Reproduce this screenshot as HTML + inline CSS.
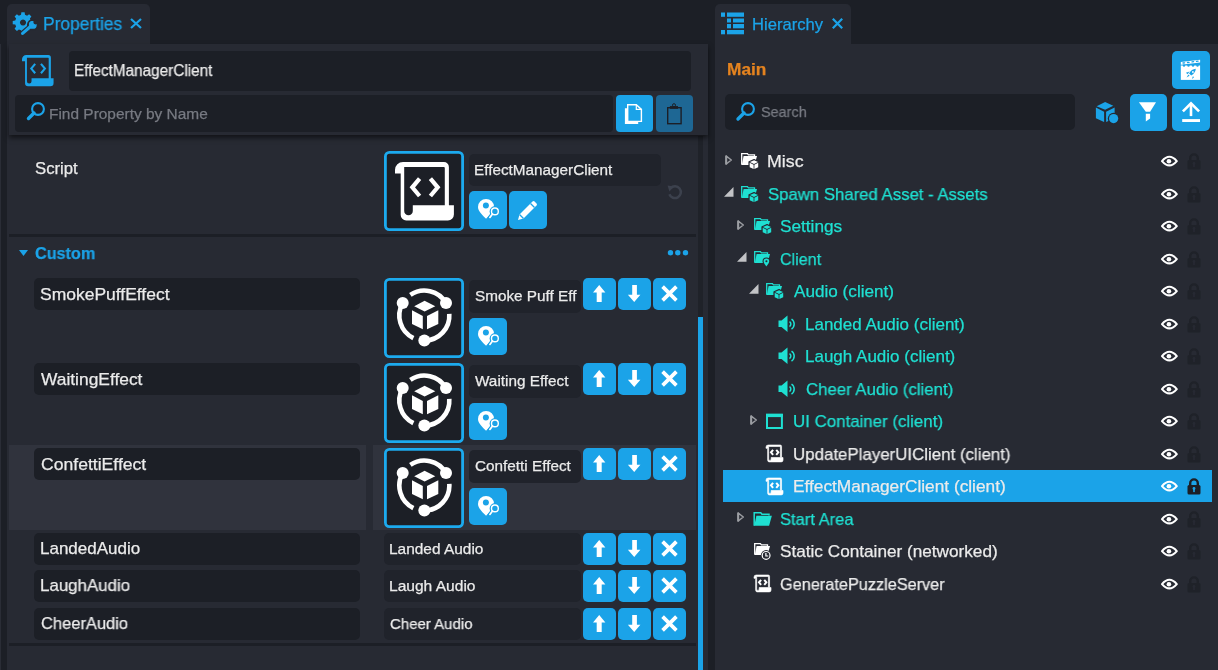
<!DOCTYPE html>
<html><head><meta charset="utf-8"><style>
html,body{margin:0;padding:0;width:1218px;height:670px;overflow:hidden;background:#1c1f26;}
body>div,body>svg,body>span{position:absolute;}
div>span.t, span.t{position:absolute;font-family:"Liberation Sans",sans-serif;white-space:nowrap;line-height:0;height:0;will-change:transform;-webkit-text-stroke:0.25px currentColor;}
svg{position:absolute;overflow:visible}
div{position:absolute;box-sizing:border-box}
</style></head><body>
<div style="left:0px;top:0px;width:1218px;height:670px;background:#1c1f26;border-radius:0px;"></div>
<div style="left:0px;top:44px;width:1px;height:626px;background:#2a2d36;border-radius:0px;"></div>
<div style="left:7px;top:4px;width:143px;height:44px;background:#272a33;border-radius:5px;border-bottom-left-radius:0;border-bottom-right-radius:0"></div>
<div style="left:7px;top:44px;width:701px;height:626px;background:#272a33;border-radius:0px;"></div>
<div style="left:715px;top:4px;width:136px;height:44px;background:#272a33;border-radius:5px;border-bottom-left-radius:0;border-bottom-right-radius:0"></div>
<div style="left:715px;top:44px;width:503px;height:626px;background:#272a33;border-radius:0px;"></div>
<span class="t" style="left:42.61px;top:23.94px;font-size:17.5px;color:#1ba3e8;font-weight:400;transform:scaleX(0.9923);transform-origin:0 0;">Properties</span>
<svg style="left:130px;top:18px" width="12" height="11" viewBox="0 0 12 11"><path d="M1 1L11 10M11 1L1 10" stroke="#1ba3e8" stroke-width="2.2"/></svg>
<svg style="left:10px;top:8px" width="30" height="30" viewBox="0 0 30 30"><path d="M11.37,4.28 L14.63,4.28 L14.99,6.80 L17.07,7.66 L19.11,6.14 L21.41,8.44 L19.89,10.48 L20.75,12.56 L23.27,12.92 L23.27,16.18 L20.75,16.54 L19.89,18.62 L21.41,20.66 L19.11,22.96 L17.07,21.44 L14.99,22.30 L14.63,24.82 L11.37,24.82 L11.01,22.30 L8.93,21.44 L6.89,22.96 L4.59,20.66 L6.11,18.62 L5.25,16.54 L2.73,16.18 L2.73,12.92 L5.25,12.56 L6.11,10.48 L4.59,8.44 L6.89,6.14 L8.93,7.66 L11.01,6.80Z M13,11.5 a3.05,3.05 0 1,0 0.01,0Z" fill="#1ba3e8" fill-rule="evenodd"/><g stroke="#272a33" fill="none"><path d="M12.6,25.4 L20.5,18.5" stroke-width="5.4" stroke-linecap="round"/><circle cx="22.8" cy="16.9" r="4.9" stroke-width="2" /></g><path d="M12.6,25.4 L20.5,18.5" stroke="#1ba3e8" stroke-width="3.2" stroke-linecap="round"/><circle cx="22.8" cy="16.9" r="3.9" fill="#1ba3e8"/><circle cx="25.6" cy="14.1" r="2.3" fill="#272a33"/></svg>
<div style="left:698px;top:136px;width:5px;height:534px;background:#1f2229;border-radius:0px;"></div>
<div style="left:698px;top:317px;width:5px;height:353px;background:#1ba3e8;border-radius:0px;"></div>
<span class="t" style="left:34.60px;top:169.25px;font-size:16.6px;color:#ebebeb;font-weight:400;transform:scaleX(1.0069);transform-origin:0 0;">Script</span>
<svg style="left:384px;top:151px" width="80" height="80" viewBox="0 0 80 80"><rect x="1.4" y="1.4" width="77.2" height="77.2" rx="4" fill="#1c1f26" stroke="#1caaee" stroke-width="2.8"/></svg>
<svg style="left:395.1px;top:162.1px" width="61" height="61" viewBox="0 0 61 61"><g transform="scale(1.0)"><path d="M0,11.6 V8 A8,8 0 0 1 8,0 H48.9 A5,5 0 0 1 53.9,5 V43.2 H58.9 V52.4 A6,6 0 0 1 52.9,58.4 H11.2 A5.5,5.5 0 0 1 5.7,52.9 V11.6 Z M9.2,5.1 H48.8 A1,1 0 0 1 49.8,6.1 V43.2 H17.8 V49 A4.3,4.3 0 0 1 9.2,49 V5.1 Z" fill="#fff" fill-rule="evenodd"/><path d="M24.6,16.6 L17.3,25.3 L24.6,34 M35.4,16.6 L42.7,25.3 L35.4,34" stroke="#fff" stroke-width="4.2" fill="none"/></g></svg>
<div style="left:469px;top:154px;width:192px;height:32px;background:#20232b;border-radius:5px;"></div>
<span class="t" style="left:474.30px;top:169.90px;font-size:15.3px;color:#ebebeb;font-weight:400;">EffectManagerClient</span>
<div style="left:469px;top:191px;width:38px;height:38px;background:#1ba3e8;border-radius:5px;"></div>
<svg style="left:469px;top:191px" width="38" height="38" viewBox="0 0 38 38"><path d="M17.05,27.8 C14,24.5 9,20.5 9,16 A8.05,8.05 0 0 1 25.1,16 C25.1,20.5 20,24.5 17.05,27.8Z" fill="#fff"/><circle cx="16.9" cy="14.6" r="3" fill="#1ba3e8"/><path d="M23.6,22.7 L20.4,26.9" stroke="#1ba3e8" stroke-width="3.6" stroke-linecap="round"/><circle cx="25.9" cy="20.4" r="5.3" fill="#1ba3e8"/><circle cx="25.9" cy="20.4" r="3.4" stroke="#fff" stroke-width="1.4" fill="none"/><path d="M23.5,22.9 L20.9,26.4" stroke="#fff" stroke-width="1.7" stroke-linecap="round"/></svg>
<div style="left:509px;top:191px;width:38px;height:38px;background:#1ba3e8;border-radius:5px;"></div>
<svg style="left:515.4px;top:198.8px" width="24" height="24" viewBox="0 0 24 24"><path d="M3,21 L4.5,15.5 L17.5,2.5 a1.5,1.5 0 0 1 2.1,0 L21.5,4.4 a1.5,1.5 0 0 1 0,2.1 L8.5,19.5 Z" fill="#fff"/><path d="M15.5,4.5 L19.5,8.5" stroke="#1ba3e8" stroke-width="1.2"/><path d="M4.5,15.5 L8.5,19.5" stroke="#1ba3e8" stroke-width="1.2"/></svg>
<svg style="left:666px;top:183px" width="18" height="18" viewBox="0 0 18 18"><path d="M4.6,5.2 A5.9,5.9 0 1 1 3.4,11.2" stroke="#3c414d" stroke-width="2.5" fill="none"/><path d="M1.6,2.6 L8,3.4 L3.4,8.6 Z" fill="#3c414d"/></svg>
<div style="left:9px;top:234px;width:687px;height:3px;background:#1c1f26;border-radius:0px;"></div>
<svg style="left:19px;top:250px" width="9" height="6" viewBox="0 0 9 6"><path d="M0,0 H9 L4.5,6Z" fill="#1ba3e8"/></svg>
<span class="t" style="left:35.40px;top:254.25px;font-size:16.6px;color:#1ba3e8;font-weight:700;transform:scaleX(0.9769);transform-origin:0 0;">Custom</span>
<svg style="left:666px;top:248px" width="24" height="9" viewBox="0 0 24 9"><circle cx="4.5" cy="4.7" r="2.7" fill="#1ba3e8"/><circle cx="11.8" cy="4.7" r="2.7" fill="#1ba3e8"/><circle cx="19.5" cy="4.7" r="2.7" fill="#1ba3e8"/></svg>
<div style="left:9px;top:445px;width:357px;height:85px;background:#30333d;border-radius:0px;"></div>
<div style="left:373px;top:445px;width:323px;height:85px;background:#30333d;border-radius:0px;"></div>
<div style="left:34px;top:278px;width:326px;height:32px;background:#1c1f26;border-radius:5px;"></div>
<span class="t" style="left:40.20px;top:294.71px;font-size:17px;color:#ebebeb;font-weight:400;transform:scaleX(1.0279);transform-origin:0 0;">SmokePuffEffect</span>
<svg style="left:384px;top:278px" width="80" height="80" viewBox="0 0 80 80"><rect x="1.4" y="1.4" width="77.2" height="77.2" rx="4" fill="#1c1f26" stroke="#1caaee" stroke-width="2.8"/><path d="M26.37,16.87 A25,25 0 0 1 62.00,25.10" stroke="#fff" stroke-width="4.6" fill="none"/><path d="M65.29,35.86 A25,25 0 0 1 40.35,62.60" stroke="#fff" stroke-width="4.6" fill="none"/><path d="M29.39,60.07 A25,25 0 0 1 18.70,25.10" stroke="#fff" stroke-width="4.6" fill="none"/><circle cx="18.70" cy="25.10" r="6" fill="#fff"/><circle cx="62.00" cy="25.10" r="6" fill="#fff"/><circle cx="40.35" cy="62.60" r="6" fill="#fff"/><path d="M40.6,22.7 L51.3,28.3 L40.6,33.6 L30.2,28.3Z" fill="#fff"/><path d="M28,32.2 L38.8,38 V51.3 L28,46Z" fill="#fff"/><path d="M54.3,32.2 L43,38 V51.3 L54.3,46Z" fill="#fff"/></svg>
<div style="left:469px;top:280px;width:112px;height:33px;background:#20232b;border-radius:5px;overflow:hidden"><div style="left:0;top:0;width:108px;height:33px;overflow:hidden"><span class="t" style="left:6.3px;top:15.70px;font-size:15.3px;color:#ebebeb">Smoke Puff Effect</span></div></div>
<div style="left:583px;top:278px;width:33px;height:32px;background:#1ba3e8;border-radius:5px;"></div>
<svg style="left:583px;top:278px" width="33" height="32" viewBox="0 0 33 32"><path d="M16.2,7 L22.4,14.6 H18.7 V24 H13.7 V14.6 H10 Z" fill="#fff"/></svg>
<div style="left:618px;top:278px;width:33px;height:32px;background:#1ba3e8;border-radius:5px;"></div>
<svg style="left:618px;top:278px" width="33" height="32" viewBox="0 0 33 32"><path d="M14.2,7 H18.9 V16.7 H22.4 L16.2,24 L9.9,16.7 H14.2 Z" fill="#fff"/></svg>
<div style="left:653px;top:278px;width:33px;height:32px;background:#1ba3e8;border-radius:5px;"></div>
<svg style="left:653px;top:278px" width="33" height="32" viewBox="0 0 33 32"><path d="M9.6,8.6 L23.4,22.4 M23.4,8.6 L9.6,22.4" stroke="#fff" stroke-width="3.7"/></svg>
<div style="left:469px;top:318px;width:38px;height:37px;background:#1ba3e8;border-radius:5px;"></div>
<svg style="left:469px;top:318px" width="38" height="38" viewBox="0 0 38 38"><path d="M17.05,27.8 C14,24.5 9,20.5 9,16 A8.05,8.05 0 0 1 25.1,16 C25.1,20.5 20,24.5 17.05,27.8Z" fill="#fff"/><circle cx="16.9" cy="14.6" r="3" fill="#1ba3e8"/><path d="M23.6,22.7 L20.4,26.9" stroke="#1ba3e8" stroke-width="3.6" stroke-linecap="round"/><circle cx="25.9" cy="20.4" r="5.3" fill="#1ba3e8"/><circle cx="25.9" cy="20.4" r="3.4" stroke="#fff" stroke-width="1.4" fill="none"/><path d="M23.5,22.9 L20.9,26.4" stroke="#fff" stroke-width="1.7" stroke-linecap="round"/></svg>
<div style="left:34px;top:363px;width:326px;height:32px;background:#1c1f26;border-radius:5px;"></div>
<span class="t" style="left:40.50px;top:379.71px;font-size:17px;color:#ebebeb;font-weight:400;transform:scaleX(1.0222);transform-origin:0 0;">WaitingEffect</span>
<svg style="left:384px;top:363px" width="80" height="80" viewBox="0 0 80 80"><rect x="1.4" y="1.4" width="77.2" height="77.2" rx="4" fill="#1c1f26" stroke="#1caaee" stroke-width="2.8"/><path d="M26.37,16.87 A25,25 0 0 1 62.00,25.10" stroke="#fff" stroke-width="4.6" fill="none"/><path d="M65.29,35.86 A25,25 0 0 1 40.35,62.60" stroke="#fff" stroke-width="4.6" fill="none"/><path d="M29.39,60.07 A25,25 0 0 1 18.70,25.10" stroke="#fff" stroke-width="4.6" fill="none"/><circle cx="18.70" cy="25.10" r="6" fill="#fff"/><circle cx="62.00" cy="25.10" r="6" fill="#fff"/><circle cx="40.35" cy="62.60" r="6" fill="#fff"/><path d="M40.6,22.7 L51.3,28.3 L40.6,33.6 L30.2,28.3Z" fill="#fff"/><path d="M28,32.2 L38.8,38 V51.3 L28,46Z" fill="#fff"/><path d="M54.3,32.2 L43,38 V51.3 L54.3,46Z" fill="#fff"/></svg>
<div style="left:469px;top:365px;width:112px;height:33px;background:#20232b;border-radius:5px;overflow:hidden"><div style="left:0;top:0;width:108px;height:33px;overflow:hidden"><span class="t" style="left:6.3px;top:15.70px;font-size:15.3px;color:#ebebeb">Waiting Effect</span></div></div>
<div style="left:583px;top:363px;width:33px;height:32px;background:#1ba3e8;border-radius:5px;"></div>
<svg style="left:583px;top:363px" width="33" height="32" viewBox="0 0 33 32"><path d="M16.2,7 L22.4,14.6 H18.7 V24 H13.7 V14.6 H10 Z" fill="#fff"/></svg>
<div style="left:618px;top:363px;width:33px;height:32px;background:#1ba3e8;border-radius:5px;"></div>
<svg style="left:618px;top:363px" width="33" height="32" viewBox="0 0 33 32"><path d="M14.2,7 H18.9 V16.7 H22.4 L16.2,24 L9.9,16.7 H14.2 Z" fill="#fff"/></svg>
<div style="left:653px;top:363px;width:33px;height:32px;background:#1ba3e8;border-radius:5px;"></div>
<svg style="left:653px;top:363px" width="33" height="32" viewBox="0 0 33 32"><path d="M9.6,8.6 L23.4,22.4 M23.4,8.6 L9.6,22.4" stroke="#fff" stroke-width="3.7"/></svg>
<div style="left:469px;top:403px;width:38px;height:37px;background:#1ba3e8;border-radius:5px;"></div>
<svg style="left:469px;top:403px" width="38" height="38" viewBox="0 0 38 38"><path d="M17.05,27.8 C14,24.5 9,20.5 9,16 A8.05,8.05 0 0 1 25.1,16 C25.1,20.5 20,24.5 17.05,27.8Z" fill="#fff"/><circle cx="16.9" cy="14.6" r="3" fill="#1ba3e8"/><path d="M23.6,22.7 L20.4,26.9" stroke="#1ba3e8" stroke-width="3.6" stroke-linecap="round"/><circle cx="25.9" cy="20.4" r="5.3" fill="#1ba3e8"/><circle cx="25.9" cy="20.4" r="3.4" stroke="#fff" stroke-width="1.4" fill="none"/><path d="M23.5,22.9 L20.9,26.4" stroke="#fff" stroke-width="1.7" stroke-linecap="round"/></svg>
<div style="left:34px;top:448px;width:326px;height:32px;background:#1c1f26;border-radius:5px;"></div>
<span class="t" style="left:40.50px;top:464.71px;font-size:17px;color:#ebebeb;font-weight:400;transform:scaleX(1.0341);transform-origin:0 0;">ConfettiEffect</span>
<svg style="left:384px;top:448px" width="80" height="80" viewBox="0 0 80 80"><rect x="1.4" y="1.4" width="77.2" height="77.2" rx="4" fill="#1c1f26" stroke="#1caaee" stroke-width="2.8"/><path d="M26.37,16.87 A25,25 0 0 1 62.00,25.10" stroke="#fff" stroke-width="4.6" fill="none"/><path d="M65.29,35.86 A25,25 0 0 1 40.35,62.60" stroke="#fff" stroke-width="4.6" fill="none"/><path d="M29.39,60.07 A25,25 0 0 1 18.70,25.10" stroke="#fff" stroke-width="4.6" fill="none"/><circle cx="18.70" cy="25.10" r="6" fill="#fff"/><circle cx="62.00" cy="25.10" r="6" fill="#fff"/><circle cx="40.35" cy="62.60" r="6" fill="#fff"/><path d="M40.6,22.7 L51.3,28.3 L40.6,33.6 L30.2,28.3Z" fill="#fff"/><path d="M28,32.2 L38.8,38 V51.3 L28,46Z" fill="#fff"/><path d="M54.3,32.2 L43,38 V51.3 L54.3,46Z" fill="#fff"/></svg>
<div style="left:469px;top:450px;width:112px;height:33px;background:#20232b;border-radius:5px;overflow:hidden"><div style="left:0;top:0;width:108px;height:33px;overflow:hidden"><span class="t" style="left:6.3px;top:15.70px;font-size:15.3px;color:#ebebeb">Confetti Effect</span></div></div>
<div style="left:583px;top:448px;width:33px;height:32px;background:#1ba3e8;border-radius:5px;"></div>
<svg style="left:583px;top:448px" width="33" height="32" viewBox="0 0 33 32"><path d="M16.2,7 L22.4,14.6 H18.7 V24 H13.7 V14.6 H10 Z" fill="#fff"/></svg>
<div style="left:618px;top:448px;width:33px;height:32px;background:#1ba3e8;border-radius:5px;"></div>
<svg style="left:618px;top:448px" width="33" height="32" viewBox="0 0 33 32"><path d="M14.2,7 H18.9 V16.7 H22.4 L16.2,24 L9.9,16.7 H14.2 Z" fill="#fff"/></svg>
<div style="left:653px;top:448px;width:33px;height:32px;background:#1ba3e8;border-radius:5px;"></div>
<svg style="left:653px;top:448px" width="33" height="32" viewBox="0 0 33 32"><path d="M9.6,8.6 L23.4,22.4 M23.4,8.6 L9.6,22.4" stroke="#fff" stroke-width="3.7"/></svg>
<div style="left:469px;top:488px;width:38px;height:37px;background:#1ba3e8;border-radius:5px;"></div>
<svg style="left:469px;top:488px" width="38" height="38" viewBox="0 0 38 38"><path d="M17.05,27.8 C14,24.5 9,20.5 9,16 A8.05,8.05 0 0 1 25.1,16 C25.1,20.5 20,24.5 17.05,27.8Z" fill="#fff"/><circle cx="16.9" cy="14.6" r="3" fill="#1ba3e8"/><path d="M23.6,22.7 L20.4,26.9" stroke="#1ba3e8" stroke-width="3.6" stroke-linecap="round"/><circle cx="25.9" cy="20.4" r="5.3" fill="#1ba3e8"/><circle cx="25.9" cy="20.4" r="3.4" stroke="#fff" stroke-width="1.4" fill="none"/><path d="M23.5,22.9 L20.9,26.4" stroke="#fff" stroke-width="1.7" stroke-linecap="round"/></svg>
<div style="left:34px;top:533px;width:326px;height:32px;background:#1c1f26;border-radius:5px;"></div>
<span class="t" style="left:39.50px;top:549.11px;font-size:17px;color:#ebebeb;font-weight:400;transform:scaleX(0.9974);transform-origin:0 0;">LandedAudio</span>
<div style="left:384px;top:533px;width:197px;height:32px;background:#20232b;border-radius:5px;"></div>
<span class="t" style="left:389.40px;top:548.66px;font-size:15.4px;color:#ebebeb;font-weight:400;transform:scaleX(1.0028);transform-origin:0 0;">Landed Audio</span>
<div style="left:583px;top:533px;width:33px;height:32px;background:#1ba3e8;border-radius:5px;"></div>
<svg style="left:583px;top:533px" width="33" height="32" viewBox="0 0 33 32"><path d="M16.2,7 L22.4,14.6 H18.7 V24 H13.7 V14.6 H10 Z" fill="#fff"/></svg>
<div style="left:618px;top:533px;width:33px;height:32px;background:#1ba3e8;border-radius:5px;"></div>
<svg style="left:618px;top:533px" width="33" height="32" viewBox="0 0 33 32"><path d="M14.2,7 H18.9 V16.7 H22.4 L16.2,24 L9.9,16.7 H14.2 Z" fill="#fff"/></svg>
<div style="left:653px;top:533px;width:33px;height:32px;background:#1ba3e8;border-radius:5px;"></div>
<svg style="left:653px;top:533px" width="33" height="32" viewBox="0 0 33 32"><path d="M9.6,8.6 L23.4,22.4 M23.4,8.6 L9.6,22.4" stroke="#fff" stroke-width="3.7"/></svg>
<div style="left:34px;top:570px;width:326px;height:32px;background:#1c1f26;border-radius:5px;"></div>
<span class="t" style="left:39.51px;top:586.11px;font-size:17px;color:#ebebeb;font-weight:400;transform:scaleX(0.9933);transform-origin:0 0;">LaughAudio</span>
<div style="left:384px;top:570px;width:197px;height:32px;background:#20232b;border-radius:5px;"></div>
<span class="t" style="left:389.39px;top:585.66px;font-size:15.4px;color:#ebebeb;font-weight:400;transform:scaleX(1.0109);transform-origin:0 0;">Laugh Audio</span>
<div style="left:583px;top:570px;width:33px;height:32px;background:#1ba3e8;border-radius:5px;"></div>
<svg style="left:583px;top:570px" width="33" height="32" viewBox="0 0 33 32"><path d="M16.2,7 L22.4,14.6 H18.7 V24 H13.7 V14.6 H10 Z" fill="#fff"/></svg>
<div style="left:618px;top:570px;width:33px;height:32px;background:#1ba3e8;border-radius:5px;"></div>
<svg style="left:618px;top:570px" width="33" height="32" viewBox="0 0 33 32"><path d="M14.2,7 H18.9 V16.7 H22.4 L16.2,24 L9.9,16.7 H14.2 Z" fill="#fff"/></svg>
<div style="left:653px;top:570px;width:33px;height:32px;background:#1ba3e8;border-radius:5px;"></div>
<svg style="left:653px;top:570px" width="33" height="32" viewBox="0 0 33 32"><path d="M9.6,8.6 L23.4,22.4 M23.4,8.6 L9.6,22.4" stroke="#fff" stroke-width="3.7"/></svg>
<div style="left:34px;top:608px;width:326px;height:32px;background:#1c1f26;border-radius:5px;"></div>
<span class="t" style="left:40.50px;top:624.11px;font-size:17px;color:#ebebeb;font-weight:400;transform:scaleX(0.9695);transform-origin:0 0;">CheerAudio</span>
<div style="left:384px;top:608px;width:197px;height:32px;background:#20232b;border-radius:5px;"></div>
<span class="t" style="left:390.40px;top:623.66px;font-size:15.4px;color:#ebebeb;font-weight:400;transform:scaleX(0.9741);transform-origin:0 0;">Cheer Audio</span>
<div style="left:583px;top:608px;width:33px;height:32px;background:#1ba3e8;border-radius:5px;"></div>
<svg style="left:583px;top:608px" width="33" height="32" viewBox="0 0 33 32"><path d="M16.2,7 L22.4,14.6 H18.7 V24 H13.7 V14.6 H10 Z" fill="#fff"/></svg>
<div style="left:618px;top:608px;width:33px;height:32px;background:#1ba3e8;border-radius:5px;"></div>
<svg style="left:618px;top:608px" width="33" height="32" viewBox="0 0 33 32"><path d="M14.2,7 H18.9 V16.7 H22.4 L16.2,24 L9.9,16.7 H14.2 Z" fill="#fff"/></svg>
<div style="left:653px;top:608px;width:33px;height:32px;background:#1ba3e8;border-radius:5px;"></div>
<svg style="left:653px;top:608px" width="33" height="32" viewBox="0 0 33 32"><path d="M9.6,8.6 L23.4,22.4 M23.4,8.6 L9.6,22.4" stroke="#fff" stroke-width="3.7"/></svg>
<div style="left:9px;top:643px;width:687px;height:3px;background:#1c1f26;border-radius:0px;"></div>
<div style="left:9px;top:44px;width:699px;height:91px;background:#272a33;border-radius:0px;box-shadow:0 3px 5px rgba(0,0,0,0.55)"></div>
<svg style="left:22.2px;top:55.3px" width="33" height="33" viewBox="0 0 33 33"><g transform="scale(0.536)"><path d="M0,11.6 V8 A8,8 0 0 1 8,0 H48.9 A5,5 0 0 1 53.9,5 V43.2 H58.9 V52.4 A6,6 0 0 1 52.9,58.4 H11.2 A5.5,5.5 0 0 1 5.7,52.9 V11.6 Z M9.2,5.1 H48.8 A1,1 0 0 1 49.8,6.1 V43.2 H17.8 V49 A4.3,4.3 0 0 1 9.2,49 V5.1 Z" fill="#1ba3e8" fill-rule="evenodd"/><path d="M24.6,16.6 L17.3,25.3 L24.6,34 M35.4,16.6 L42.7,25.3 L35.4,34" stroke="#1ba3e8" stroke-width="3.9" fill="none"/></g></svg>
<div style="left:69px;top:51px;width:622px;height:40px;background:#1c1f26;border-radius:4px;"></div>
<span class="t" style="left:74.45px;top:70.19px;font-size:16.2px;color:#ebebeb;font-weight:400;transform:scaleX(0.9461);transform-origin:0 0;">EffectManagerClient</span>
<div style="left:15px;top:95px;width:598px;height:37px;background:#1c1f26;border-radius:4px;"></div>
<svg style="left:26px;top:101px" width="20" height="20" viewBox="0 0 20 20"><circle cx="12" cy="8" r="5.9" stroke="#1ba3e8" stroke-width="2.1" fill="none"/><path d="M8,12 L2.5,17.5" stroke="#1ba3e8" stroke-width="3.4" stroke-linecap="round"/></svg>
<span class="t" style="left:49.30px;top:113.66px;font-size:15.4px;color:#777a82;font-weight:400;transform:scaleX(1.0033);transform-origin:0 0;">Find Property by Name</span>
<div style="left:616px;top:95px;width:37px;height:37px;background:#1ba3e8;border-radius:4px;"></div>
<svg style="left:616px;top:95px" width="37" height="37" viewBox="0 0 37 37"><path d="M8.9,13.2 H11.8 V26.3 H22.2 V29 H8.9 Z" fill="#fff"/><path d="M11.7,9.7 H20.3 L25.4,14.4 V26.4 H11.7 Z" fill="none" stroke="#fff" stroke-width="1.4"/><path d="M20.3,9.7 V14.4 H25.4" fill="none" stroke="#fff" stroke-width="1.2"/></svg>
<div style="left:656px;top:95px;width:37px;height:37px;background:#1e6794;border-radius:4px;"></div>
<svg style="left:656px;top:95px" width="37" height="37" viewBox="0 0 37 37"><rect x="11.7" y="12.7" width="13.4" height="16" fill="none" stroke="#1c1f26" stroke-width="1.4"/><rect x="13.9" y="11.1" width="8.1" height="2.7" fill="#1c1f26"/><circle cx="18" cy="10.2" r="1.5" fill="none" stroke="#1c1f26" stroke-width="1"/></svg>
<svg style="left:721px;top:12px" width="24" height="23" viewBox="0 0 24 23"><g fill="#1ba3e8"><rect x="0" y="0.5" width="4" height="4.3"/><rect x="6" y="0.5" width="17" height="4.3"/><rect x="6" y="6.5" width="4" height="4"/><rect x="12" y="6.5" width="11" height="4"/><rect x="6" y="12" width="4" height="4.3"/><rect x="12" y="12" width="11" height="4.3"/><rect x="0" y="18" width="4" height="4.3"/><rect x="6" y="18" width="17" height="4.3"/></g></svg>
<span class="t" style="left:751.50px;top:24.75px;font-size:16.6px;color:#1ba3e8;font-weight:400;transform:scaleX(0.9971);transform-origin:0 0;">Hierarchy</span>
<svg style="left:832px;top:18px" width="11" height="11" viewBox="0 0 11 11"><path d="M0.8,0.8 L10.2,10.2 M10.2,0.8 L0.8,10.2" stroke="#1ba3e8" stroke-width="2.2"/></svg>
<span class="t" style="left:727.37px;top:69.98px;font-size:16.8px;color:#e4831f;font-weight:700;transform:scaleX(1.0304);transform-origin:0 0;">Main</span>
<div style="left:1172px;top:51px;width:38px;height:38px;background:#1ba3e8;border-radius:5px;"></div>
<svg style="left:1172px;top:51px" width="38" height="38" viewBox="0 0 38 38"><path d="M8.8,11 L28.1,8.7 V11.4 L8.8,13.8Z" fill="#fff"/><g stroke="#1ba3e8" stroke-width="1.3" stroke-linecap="round"><path d="M11,12 L12.6,11.8"/><path d="M15.5,11.5 L17.1,11.3"/><path d="M20,10.9 L21.6,10.7"/><path d="M24.5,10.4 L26.1,10.2"/></g><rect x="8.8" y="14.5" width="19.3" height="14.4" fill="#fff"/><g fill="#1ba3e8"><circle cx="12" cy="14.6" r="1.2"/><circle cx="16.5" cy="14.6" r="1.2"/><circle cx="21" cy="14.6" r="1.2"/><circle cx="25.5" cy="14.6" r="1.2"/><path d="M23.8,17.8 C21,18 18.6,19.6 17.1,22.4 L19.2,24.5 C22,23 23.6,20.6 23.8,17.8Z"/><path d="M17.6,20.6 L13.9,21.7 L15.6,23.3Z"/><path d="M21,24.9 L19.9,28 L21.9,26.6Z"/><path d="M16.4,23.6 L14.6,26.6 L17.6,24.8Z"/></g><circle cx="20.9" cy="21" r="0.9" fill="#fff"/></svg>
<div style="left:725px;top:94px;width:350px;height:36px;background:#1c1f26;border-radius:5px;"></div>
<svg style="left:735px;top:101px" width="21" height="21" viewBox="0 0 21 21"><circle cx="13" cy="8" r="5.9" stroke="#1ba3e8" stroke-width="2.1" fill="none"/><path d="M9,12 L3,18" stroke="#1ba3e8" stroke-width="3.4" stroke-linecap="round"/></svg>
<span class="t" style="left:760.50px;top:111.87px;font-size:14.8px;color:#777a82;font-weight:400;transform:scaleX(0.9753);transform-origin:0 0;">Search</span>
<svg style="left:1090px;top:94px" width="30" height="32" viewBox="0 0 30 32"><path d="M15.1,7.9 L23.3,11.8 L15.1,15.8 L6.6,12.2Z" fill="#1ba3e8"/><path d="M5.9,13.5 L14.1,17.7 V27.9 L5.9,24.3Z" fill="#1ba3e8"/><path d="M24.6,13.5 L16.1,17.7 V27.9 L24.6,24.3Z" fill="#1ba3e8"/><circle cx="23.6" cy="24.6" r="5.8" fill="#272a33"/><circle cx="23.6" cy="24.6" r="4.6" fill="#1ba3e8"/></svg>
<div style="left:1130px;top:94px;width:37px;height:37px;background:#1ba3e8;border-radius:5px;"></div>
<svg style="left:1130px;top:94px" width="37" height="37" viewBox="0 0 37 37"><path d="M8.9,8.2 H26 L20.1,17.7 H15.8 Z" fill="#fff"/><path d="M15.8,19.7 H20.1 V24.6 L15.8,27.6 Z" fill="#fff"/></svg>
<div style="left:1172px;top:94px;width:38px;height:37px;background:#1ba3e8;border-radius:5px;"></div>
<svg style="left:1172px;top:94px" width="38" height="37" viewBox="0 0 38 37"><path d="M10.9,17.4 L19,9.3 L27.1,17.4" stroke="#fff" stroke-width="2.6" fill="none"/><path d="M19,10 V22.1" stroke="#fff" stroke-width="2.6"/><rect x="10.2" y="25.1" width="17.8" height="2.9" fill="#fff"/></svg>
<svg style="left:724.6px;top:154.9px" width="9" height="11" viewBox="0 0 9 11"><path d="M1.2,1 L6.3,5 L1.2,9 Z" stroke="#9c9ea3" stroke-width="1.5" fill="none" stroke-linejoin="round"/><rect x="0.2" y="0.4" width="2" height="9.2" rx="0.6" fill="#9c9ea3"/></svg>
<svg style="left:740.0px;top:152.0px" width="20" height="19" viewBox="0 0 20 19"><path d="M1.7,12.8 V1.6 H7.4 L8.4,2.8 H14.5 V4" fill="none" stroke="#fff" stroke-width="1.3"/><path d="M3.6,4.1 H17 L14.6,12.9 H1.8 Z" fill="#fff"/><path d="M14.1,7.6 L18.8,10 V15.6 L14,17.9 L9.1,15.6 V10 Z" fill="#272a33" stroke="#272a33" stroke-width="1.4" stroke-linejoin="round"/><path d="M14.1,8.3 L18,10.1 L14,12 L9.9,10.1Z" fill="#fff"/><path d="M9.7,10.8 L13.6,12.7 V17 L9.7,15.2Z" fill="#fff"/><path d="M18.2,10.8 L14.4,12.7 V17 L18.2,15.2Z" fill="#fff"/></svg>
<span class="t" style="left:767.35px;top:162.11px;font-size:17px;color:#ebebeb;font-weight:400;transform:scaleX(1.0454);transform-origin:0 0;">Misc</span>
<svg style="left:1159.8px;top:155.0px" width="18" height="12" viewBox="0 0 18 12"><path d="M2,6.1 Q9.4,-2.5 16.8,6.1 Q9.4,14.7 2,6.1Z" stroke="#fff" stroke-width="2.1" fill="none" stroke-linejoin="round"/><circle cx="8.9" cy="6.2" r="2.3" fill="#fff"/></svg>
<svg style="left:1187.2px;top:153.0px" width="14" height="17" viewBox="0 0 14 17"><path d="M3.2,7.5 V5.2 a3.8,3.8 0 0 1 7.6,0 V7.5" stroke="#1f2229" stroke-width="2.4" fill="none"/><rect x="0.5" y="7" width="13" height="9.5" rx="1.5" fill="#1f2229"/><circle cx="7" cy="10.5" r="1.4" fill="#272a33"/><rect x="6.2" y="10.5" width="1.6" height="3.6" fill="#272a33"/></svg>
<svg style="left:724.0px;top:186.5px" width="10" height="10" viewBox="0 0 10 10"><path d="M9.5,0 V9.8 H0 Z" fill="#c2c3c6"/></svg>
<svg style="left:740.0px;top:184.5px" width="20" height="19" viewBox="0 0 20 19"><path d="M1.7,12.8 V1.6 H7.4 L8.4,2.8 H14.5 V4" fill="none" stroke="#1fe0d2" stroke-width="1.3"/><path d="M3.6,4.1 H17 L14.6,12.9 H1.8 Z" fill="#1fe0d2"/><path d="M14.1,7.6 L18.8,10 V15.6 L14,17.9 L9.1,15.6 V10 Z" fill="#272a33" stroke="#272a33" stroke-width="1.4" stroke-linejoin="round"/><path d="M14.1,8.3 L18,10.1 L14,12 L9.9,10.1Z" fill="#1fe0d2"/><path d="M9.7,10.8 L13.6,12.7 V17 L9.7,15.2Z" fill="#1fe0d2"/><path d="M18.2,10.8 L14.4,12.7 V17 L18.2,15.2Z" fill="#1fe0d2"/></svg>
<span class="t" style="left:768.20px;top:194.61px;font-size:17px;color:#1fe0d2;font-weight:400;transform:scaleX(0.9849);transform-origin:0 0;">Spawn Shared Asset - Assets</span>
<svg style="left:1159.8px;top:187.5px" width="18" height="12" viewBox="0 0 18 12"><path d="M2,6.1 Q9.4,-2.5 16.8,6.1 Q9.4,14.7 2,6.1Z" stroke="#fff" stroke-width="2.1" fill="none" stroke-linejoin="round"/><circle cx="8.9" cy="6.2" r="2.3" fill="#fff"/></svg>
<svg style="left:1187.2px;top:185.5px" width="14" height="17" viewBox="0 0 14 17"><path d="M3.2,7.5 V5.2 a3.8,3.8 0 0 1 7.6,0 V7.5" stroke="#1f2229" stroke-width="2.4" fill="none"/><rect x="0.5" y="7" width="13" height="9.5" rx="1.5" fill="#1f2229"/><circle cx="7" cy="10.5" r="1.4" fill="#272a33"/><rect x="6.2" y="10.5" width="1.6" height="3.6" fill="#272a33"/></svg>
<svg style="left:737.1px;top:219.9px" width="9" height="11" viewBox="0 0 9 11"><path d="M1.2,1 L6.3,5 L1.2,9 Z" stroke="#9c9ea3" stroke-width="1.5" fill="none" stroke-linejoin="round"/><rect x="0.2" y="0.4" width="2" height="9.2" rx="0.6" fill="#9c9ea3"/></svg>
<svg style="left:752.5px;top:217.0px" width="20" height="19" viewBox="0 0 20 19"><path d="M1.7,12.8 V1.6 H7.4 L8.4,2.8 H14.5 V4" fill="none" stroke="#1fe0d2" stroke-width="1.3"/><path d="M3.6,4.1 H17 L14.6,12.9 H1.8 Z" fill="#1fe0d2"/><path d="M14.1,7.6 L18.8,10 V15.6 L14,17.9 L9.1,15.6 V10 Z" fill="#272a33" stroke="#272a33" stroke-width="1.4" stroke-linejoin="round"/><path d="M14.1,8.3 L18,10.1 L14,12 L9.9,10.1Z" fill="#1fe0d2"/><path d="M9.7,10.8 L13.6,12.7 V17 L9.7,15.2Z" fill="#1fe0d2"/><path d="M18.2,10.8 L14.4,12.7 V17 L18.2,15.2Z" fill="#1fe0d2"/></svg>
<span class="t" style="left:780.30px;top:227.11px;font-size:17px;color:#1fe0d2;font-weight:400;transform:scaleX(1.0127);transform-origin:0 0;">Settings</span>
<svg style="left:1159.8px;top:220.0px" width="18" height="12" viewBox="0 0 18 12"><path d="M2,6.1 Q9.4,-2.5 16.8,6.1 Q9.4,14.7 2,6.1Z" stroke="#fff" stroke-width="2.1" fill="none" stroke-linejoin="round"/><circle cx="8.9" cy="6.2" r="2.3" fill="#fff"/></svg>
<svg style="left:1187.2px;top:218.0px" width="14" height="17" viewBox="0 0 14 17"><path d="M3.2,7.5 V5.2 a3.8,3.8 0 0 1 7.6,0 V7.5" stroke="#1f2229" stroke-width="2.4" fill="none"/><rect x="0.5" y="7" width="13" height="9.5" rx="1.5" fill="#1f2229"/><circle cx="7" cy="10.5" r="1.4" fill="#272a33"/><rect x="6.2" y="10.5" width="1.6" height="3.6" fill="#272a33"/></svg>
<svg style="left:736.5px;top:251.5px" width="10" height="10" viewBox="0 0 10 10"><path d="M9.5,0 V9.8 H0 Z" fill="#c2c3c6"/></svg>
<svg style="left:752.5px;top:249.5px" width="20" height="19" viewBox="0 0 20 19"><path d="M1.7,12.8 V1.6 H7.4 L8.4,2.8 H14.5 V4" fill="none" stroke="#1fe0d2" stroke-width="1.3"/><path d="M3.6,4.1 H17 L14.6,12.9 H1.8 Z" fill="#1fe0d2"/><path d="M13.4,7.4 a3.9,3.9 0 0 1 3.9,3.9 c0,2.6 -3.9,6.4 -3.9,6.4 c0,0 -3.9,-3.8 -3.9,-6.4 a3.9,3.9 0 0 1 3.9,-3.9Z" fill="#272a33"/><path d="M13.4,8.5 a2.8,2.8 0 0 1 2.8,2.8 c0,2 -2.8,5.1 -2.8,5.1 c0,0 -2.8,-3.1 -2.8,-5.1 a2.8,2.8 0 0 1 2.8,-2.8Z" fill="#1fe0d2"/><circle cx="13.4" cy="11.3" r="1.05" fill="#272a33"/></svg>
<span class="t" style="left:780.30px;top:259.61px;font-size:17px;color:#1fe0d2;font-weight:400;transform:scaleX(0.9465);transform-origin:0 0;">Client</span>
<svg style="left:1159.8px;top:252.5px" width="18" height="12" viewBox="0 0 18 12"><path d="M2,6.1 Q9.4,-2.5 16.8,6.1 Q9.4,14.7 2,6.1Z" stroke="#fff" stroke-width="2.1" fill="none" stroke-linejoin="round"/><circle cx="8.9" cy="6.2" r="2.3" fill="#fff"/></svg>
<svg style="left:1187.2px;top:250.5px" width="14" height="17" viewBox="0 0 14 17"><path d="M3.2,7.5 V5.2 a3.8,3.8 0 0 1 7.6,0 V7.5" stroke="#1f2229" stroke-width="2.4" fill="none"/><rect x="0.5" y="7" width="13" height="9.5" rx="1.5" fill="#1f2229"/><circle cx="7" cy="10.5" r="1.4" fill="#272a33"/><rect x="6.2" y="10.5" width="1.6" height="3.6" fill="#272a33"/></svg>
<svg style="left:749.0px;top:284.0px" width="10" height="10" viewBox="0 0 10 10"><path d="M9.5,0 V9.8 H0 Z" fill="#c2c3c6"/></svg>
<svg style="left:765.0px;top:282.0px" width="20" height="19" viewBox="0 0 20 19"><path d="M1.7,12.8 V1.6 H7.4 L8.4,2.8 H14.5 V4" fill="none" stroke="#1fe0d2" stroke-width="1.3"/><path d="M3.6,4.1 H17 L14.6,12.9 H1.8 Z" fill="#1fe0d2"/><path d="M14.1,7.6 L18.8,10 V15.6 L14,17.9 L9.1,15.6 V10 Z" fill="#272a33" stroke="#272a33" stroke-width="1.4" stroke-linejoin="round"/><path d="M14.1,8.3 L18,10.1 L14,12 L9.9,10.1Z" fill="#1fe0d2"/><path d="M9.7,10.8 L13.6,12.7 V17 L9.7,15.2Z" fill="#1fe0d2"/><path d="M18.2,10.8 L14.4,12.7 V17 L18.2,15.2Z" fill="#1fe0d2"/></svg>
<span class="t" style="left:793.80px;top:292.11px;font-size:17px;color:#1fe0d2;font-weight:400;transform:scaleX(1.0086);transform-origin:0 0;">Audio (client)</span>
<svg style="left:1159.8px;top:285.0px" width="18" height="12" viewBox="0 0 18 12"><path d="M2,6.1 Q9.4,-2.5 16.8,6.1 Q9.4,14.7 2,6.1Z" stroke="#fff" stroke-width="2.1" fill="none" stroke-linejoin="round"/><circle cx="8.9" cy="6.2" r="2.3" fill="#fff"/></svg>
<svg style="left:1187.2px;top:283.0px" width="14" height="17" viewBox="0 0 14 17"><path d="M3.2,7.5 V5.2 a3.8,3.8 0 0 1 7.6,0 V7.5" stroke="#1f2229" stroke-width="2.4" fill="none"/><rect x="0.5" y="7" width="13" height="9.5" rx="1.5" fill="#1f2229"/><circle cx="7" cy="10.5" r="1.4" fill="#272a33"/><rect x="6.2" y="10.5" width="1.6" height="3.6" fill="#272a33"/></svg>
<svg style="left:777.7px;top:314.5px" width="19" height="18" viewBox="0 0 19 18"><path d="M0.5,5.5 H3.5 L9.5,0.5 V17 L3.5,12 H0.5Z" fill="#1fe0d2"/><path d="M11.5,6.5 a3,3 0 0 1 0,5" stroke="#1fe0d2" stroke-width="1.5" fill="none"/><path d="M13.5,4 a6,6 0 0 1 0,10" stroke="#1fe0d2" stroke-width="1.5" fill="none"/></svg>
<span class="t" style="left:804.70px;top:324.61px;font-size:17px;color:#1fe0d2;font-weight:400;">Landed Audio (client)</span>
<svg style="left:1159.8px;top:317.5px" width="18" height="12" viewBox="0 0 18 12"><path d="M2,6.1 Q9.4,-2.5 16.8,6.1 Q9.4,14.7 2,6.1Z" stroke="#fff" stroke-width="2.1" fill="none" stroke-linejoin="round"/><circle cx="8.9" cy="6.2" r="2.3" fill="#fff"/></svg>
<svg style="left:1187.2px;top:315.5px" width="14" height="17" viewBox="0 0 14 17"><path d="M3.2,7.5 V5.2 a3.8,3.8 0 0 1 7.6,0 V7.5" stroke="#1f2229" stroke-width="2.4" fill="none"/><rect x="0.5" y="7" width="13" height="9.5" rx="1.5" fill="#1f2229"/><circle cx="7" cy="10.5" r="1.4" fill="#272a33"/><rect x="6.2" y="10.5" width="1.6" height="3.6" fill="#272a33"/></svg>
<svg style="left:777.7px;top:347.0px" width="19" height="18" viewBox="0 0 19 18"><path d="M0.5,5.5 H3.5 L9.5,0.5 V17 L3.5,12 H0.5Z" fill="#1fe0d2"/><path d="M11.5,6.5 a3,3 0 0 1 0,5" stroke="#1fe0d2" stroke-width="1.5" fill="none"/><path d="M13.5,4 a6,6 0 0 1 0,10" stroke="#1fe0d2" stroke-width="1.5" fill="none"/></svg>
<span class="t" style="left:804.70px;top:357.11px;font-size:17px;color:#1fe0d2;font-weight:400;">Laugh Audio (client)</span>
<svg style="left:1159.8px;top:350.0px" width="18" height="12" viewBox="0 0 18 12"><path d="M2,6.1 Q9.4,-2.5 16.8,6.1 Q9.4,14.7 2,6.1Z" stroke="#fff" stroke-width="2.1" fill="none" stroke-linejoin="round"/><circle cx="8.9" cy="6.2" r="2.3" fill="#fff"/></svg>
<svg style="left:1187.2px;top:348.0px" width="14" height="17" viewBox="0 0 14 17"><path d="M3.2,7.5 V5.2 a3.8,3.8 0 0 1 7.6,0 V7.5" stroke="#1f2229" stroke-width="2.4" fill="none"/><rect x="0.5" y="7" width="13" height="9.5" rx="1.5" fill="#1f2229"/><circle cx="7" cy="10.5" r="1.4" fill="#272a33"/><rect x="6.2" y="10.5" width="1.6" height="3.6" fill="#272a33"/></svg>
<svg style="left:777.7px;top:379.5px" width="19" height="18" viewBox="0 0 19 18"><path d="M0.5,5.5 H3.5 L9.5,0.5 V17 L3.5,12 H0.5Z" fill="#1fe0d2"/><path d="M11.5,6.5 a3,3 0 0 1 0,5" stroke="#1fe0d2" stroke-width="1.5" fill="none"/><path d="M13.5,4 a6,6 0 0 1 0,10" stroke="#1fe0d2" stroke-width="1.5" fill="none"/></svg>
<span class="t" style="left:805.70px;top:389.61px;font-size:17px;color:#1fe0d2;font-weight:400;transform:scaleX(0.9855);transform-origin:0 0;">Cheer Audio (client)</span>
<svg style="left:1159.8px;top:382.5px" width="18" height="12" viewBox="0 0 18 12"><path d="M2,6.1 Q9.4,-2.5 16.8,6.1 Q9.4,14.7 2,6.1Z" stroke="#fff" stroke-width="2.1" fill="none" stroke-linejoin="round"/><circle cx="8.9" cy="6.2" r="2.3" fill="#fff"/></svg>
<svg style="left:1187.2px;top:380.5px" width="14" height="17" viewBox="0 0 14 17"><path d="M3.2,7.5 V5.2 a3.8,3.8 0 0 1 7.6,0 V7.5" stroke="#1f2229" stroke-width="2.4" fill="none"/><rect x="0.5" y="7" width="13" height="9.5" rx="1.5" fill="#1f2229"/><circle cx="7" cy="10.5" r="1.4" fill="#272a33"/><rect x="6.2" y="10.5" width="1.6" height="3.6" fill="#272a33"/></svg>
<svg style="left:749.6px;top:414.9px" width="9" height="11" viewBox="0 0 9 11"><path d="M1.2,1 L6.3,5 L1.2,9 Z" stroke="#9c9ea3" stroke-width="1.5" fill="none" stroke-linejoin="round"/><rect x="0.2" y="0.4" width="2" height="9.2" rx="0.6" fill="#9c9ea3"/></svg>
<svg style="left:766px;top:413.0px" width="18" height="17" viewBox="0 0 18 17"><rect x="1" y="1.8" width="14.9" height="13.2" stroke="#1fe0d2" stroke-width="2" fill="none"/><rect x="0" y="0.8" width="16.9" height="3.3" fill="#1fe0d2"/></svg>
<span class="t" style="left:792.81px;top:422.11px;font-size:17px;color:#1fe0d2;font-weight:400;transform:scaleX(0.9926);transform-origin:0 0;">UI Container (client)</span>
<svg style="left:1159.8px;top:415.0px" width="18" height="12" viewBox="0 0 18 12"><path d="M2,6.1 Q9.4,-2.5 16.8,6.1 Q9.4,14.7 2,6.1Z" stroke="#fff" stroke-width="2.1" fill="none" stroke-linejoin="round"/><circle cx="8.9" cy="6.2" r="2.3" fill="#fff"/></svg>
<svg style="left:1187.2px;top:413.0px" width="14" height="17" viewBox="0 0 14 17"><path d="M3.2,7.5 V5.2 a3.8,3.8 0 0 1 7.6,0 V7.5" stroke="#1f2229" stroke-width="2.4" fill="none"/><rect x="0.5" y="7" width="13" height="9.5" rx="1.5" fill="#1f2229"/><circle cx="7" cy="10.5" r="1.4" fill="#272a33"/><rect x="6.2" y="10.5" width="1.6" height="3.6" fill="#272a33"/></svg>
<svg style="left:766.0px;top:445.1px" width="18" height="18" viewBox="0 0 18 18"><g transform="scale(0.289)"><path d="M0,11.6 V8 A8,8 0 0 1 8,0 H48.9 A5,5 0 0 1 53.9,5 V43.2 H58.9 V52.4 A6,6 0 0 1 52.9,58.4 H11.2 A5.5,5.5 0 0 1 5.7,52.9 V11.6 Z M9.2,5.1 H48.8 A1,1 0 0 1 49.8,6.1 V43.2 H17.8 V49 A4.3,4.3 0 0 1 9.2,49 V5.1 Z" fill="#fff" fill-rule="evenodd" stroke="#fff" stroke-width="2.2"/><path d="M24.6,16.6 L17.3,25.3 L24.6,34 M35.4,16.6 L42.7,25.3 L35.4,34" stroke="#fff" stroke-width="7" fill="none"/></g></svg>
<span class="t" style="left:792.81px;top:454.61px;font-size:17px;color:#ebebeb;font-weight:400;transform:scaleX(0.9925);transform-origin:0 0;">UpdatePlayerUIClient (client)</span>
<svg style="left:1159.8px;top:447.5px" width="18" height="12" viewBox="0 0 18 12"><path d="M2,6.1 Q9.4,-2.5 16.8,6.1 Q9.4,14.7 2,6.1Z" stroke="#fff" stroke-width="2.1" fill="none" stroke-linejoin="round"/><circle cx="8.9" cy="6.2" r="2.3" fill="#fff"/></svg>
<svg style="left:1187.2px;top:445.5px" width="14" height="17" viewBox="0 0 14 17"><path d="M3.2,7.5 V5.2 a3.8,3.8 0 0 1 7.6,0 V7.5" stroke="#1f2229" stroke-width="2.4" fill="none"/><rect x="0.5" y="7" width="13" height="9.5" rx="1.5" fill="#1f2229"/><circle cx="7" cy="10.5" r="1.4" fill="#272a33"/><rect x="6.2" y="10.5" width="1.6" height="3.6" fill="#272a33"/></svg>
<div style="left:723px;top:470px;width:489px;height:32px;background:#1ba3e8;border-radius:0px;"></div>
<svg style="left:766.0px;top:477.6px" width="18" height="18" viewBox="0 0 18 18"><g transform="scale(0.289)"><path d="M0,11.6 V8 A8,8 0 0 1 8,0 H48.9 A5,5 0 0 1 53.9,5 V43.2 H58.9 V52.4 A6,6 0 0 1 52.9,58.4 H11.2 A5.5,5.5 0 0 1 5.7,52.9 V11.6 Z M9.2,5.1 H48.8 A1,1 0 0 1 49.8,6.1 V43.2 H17.8 V49 A4.3,4.3 0 0 1 9.2,49 V5.1 Z" fill="#fff" fill-rule="evenodd" stroke="#fff" stroke-width="2.2"/><path d="M24.6,16.6 L17.3,25.3 L24.6,34 M35.4,16.6 L42.7,25.3 L35.4,34" stroke="#fff" stroke-width="7" fill="none"/></g></svg>
<span class="t" style="left:792.78px;top:487.11px;font-size:17px;color:#ebebeb;font-weight:400;transform:scaleX(1.0155);transform-origin:0 0;">EffectManagerClient (client)</span>
<svg style="left:1159.8px;top:480.0px" width="18" height="12" viewBox="0 0 18 12"><path d="M2,6.1 Q9.4,-2.5 16.8,6.1 Q9.4,14.7 2,6.1Z" stroke="#fff" stroke-width="2.1" fill="none" stroke-linejoin="round"/><circle cx="8.9" cy="6.2" r="2.3" fill="#fff"/></svg>
<svg style="left:1187.2px;top:478.0px" width="14" height="17" viewBox="0 0 14 17"><path d="M3.2,7.5 V5.2 a3.8,3.8 0 0 1 7.6,0 V7.5" stroke="#1c1f26" stroke-width="2.4" fill="none"/><rect x="0.5" y="7" width="13" height="9.5" rx="1.5" fill="#1c1f26"/><circle cx="7" cy="10.5" r="1.4" fill="#1ba3e8"/><rect x="6.2" y="10.5" width="1.6" height="3.6" fill="#1ba3e8"/></svg>
<svg style="left:737.1px;top:512.4px" width="9" height="11" viewBox="0 0 9 11"><path d="M1.2,1 L6.3,5 L1.2,9 Z" stroke="#9c9ea3" stroke-width="1.5" fill="none" stroke-linejoin="round"/><rect x="0.2" y="0.4" width="2" height="9.2" rx="0.6" fill="#9c9ea3"/></svg>
<svg style="left:752.5px;top:509.5px" width="22" height="21" viewBox="0 0 20 19"><g transform="translate(-0.7,0.8) scale(1.05)"><path d="M1.7,12.8 V1.6 H7.4 L8.4,2.8 H14.5 V4" fill="none" stroke="#1fe0d2" stroke-width="1.3"/><path d="M3.6,4.1 H17 L14.6,12.9 H1.8 Z" fill="#1fe0d2"/></g></svg>
<span class="t" style="left:780.30px;top:519.61px;font-size:17px;color:#1fe0d2;font-weight:400;transform:scaleX(0.9717);transform-origin:0 0;">Start Area</span>
<svg style="left:1159.8px;top:512.5px" width="18" height="12" viewBox="0 0 18 12"><path d="M2,6.1 Q9.4,-2.5 16.8,6.1 Q9.4,14.7 2,6.1Z" stroke="#fff" stroke-width="2.1" fill="none" stroke-linejoin="round"/><circle cx="8.9" cy="6.2" r="2.3" fill="#fff"/></svg>
<svg style="left:1187.2px;top:510.5px" width="14" height="17" viewBox="0 0 14 17"><path d="M3.2,7.5 V5.2 a3.8,3.8 0 0 1 7.6,0 V7.5" stroke="#1f2229" stroke-width="2.4" fill="none"/><rect x="0.5" y="7" width="13" height="9.5" rx="1.5" fill="#1f2229"/><circle cx="7" cy="10.5" r="1.4" fill="#272a33"/><rect x="6.2" y="10.5" width="1.6" height="3.6" fill="#272a33"/></svg>
<svg style="left:752.5px;top:542.0px" width="20" height="19" viewBox="0 0 20 19"><path d="M1.7,12.8 V1.6 H7.4 L8.4,2.8 H14.5 V4" fill="none" stroke="#fff" stroke-width="1.3"/><path d="M3.6,4.1 H17 L14.6,12.9 H1.8 Z" fill="#fff"/><circle cx="13.1" cy="13.4" r="5.3" fill="#272a33"/><circle cx="13.1" cy="13.4" r="3.9" stroke="#fff" stroke-width="1.2" fill="none"/><path d="M12.9,11.1 V14 H15.2" stroke="#fff" stroke-width="1.2" fill="none"/></svg>
<span class="t" style="left:780.30px;top:552.11px;font-size:17px;color:#ebebeb;font-weight:400;transform:scaleX(1.0104);transform-origin:0 0;">Static Container (networked)</span>
<svg style="left:1159.8px;top:545.0px" width="18" height="12" viewBox="0 0 18 12"><path d="M2,6.1 Q9.4,-2.5 16.8,6.1 Q9.4,14.7 2,6.1Z" stroke="#fff" stroke-width="2.1" fill="none" stroke-linejoin="round"/><circle cx="8.9" cy="6.2" r="2.3" fill="#fff"/></svg>
<svg style="left:1187.2px;top:543.0px" width="14" height="17" viewBox="0 0 14 17"><path d="M3.2,7.5 V5.2 a3.8,3.8 0 0 1 7.6,0 V7.5" stroke="#1f2229" stroke-width="2.4" fill="none"/><rect x="0.5" y="7" width="13" height="9.5" rx="1.5" fill="#1f2229"/><circle cx="7" cy="10.5" r="1.4" fill="#272a33"/><rect x="6.2" y="10.5" width="1.6" height="3.6" fill="#272a33"/></svg>
<svg style="left:753.5px;top:575.1px" width="18" height="18" viewBox="0 0 18 18"><g transform="scale(0.289)"><path d="M0,11.6 V8 A8,8 0 0 1 8,0 H48.9 A5,5 0 0 1 53.9,5 V43.2 H58.9 V52.4 A6,6 0 0 1 52.9,58.4 H11.2 A5.5,5.5 0 0 1 5.7,52.9 V11.6 Z M9.2,5.1 H48.8 A1,1 0 0 1 49.8,6.1 V43.2 H17.8 V49 A4.3,4.3 0 0 1 9.2,49 V5.1 Z" fill="#fff" fill-rule="evenodd" stroke="#fff" stroke-width="2.2"/><path d="M24.6,16.6 L17.3,25.3 L24.6,34 M35.4,16.6 L42.7,25.3 L35.4,34" stroke="#fff" stroke-width="7" fill="none"/></g></svg>
<span class="t" style="left:780.30px;top:584.61px;font-size:17px;color:#ebebeb;font-weight:400;transform:scaleX(0.9576);transform-origin:0 0;">GeneratePuzzleServer</span>
<svg style="left:1159.8px;top:577.5px" width="18" height="12" viewBox="0 0 18 12"><path d="M2,6.1 Q9.4,-2.5 16.8,6.1 Q9.4,14.7 2,6.1Z" stroke="#fff" stroke-width="2.1" fill="none" stroke-linejoin="round"/><circle cx="8.9" cy="6.2" r="2.3" fill="#fff"/></svg>
<svg style="left:1187.2px;top:575.5px" width="14" height="17" viewBox="0 0 14 17"><path d="M3.2,7.5 V5.2 a3.8,3.8 0 0 1 7.6,0 V7.5" stroke="#1f2229" stroke-width="2.4" fill="none"/><rect x="0.5" y="7" width="13" height="9.5" rx="1.5" fill="#1f2229"/><circle cx="7" cy="10.5" r="1.4" fill="#272a33"/><rect x="6.2" y="10.5" width="1.6" height="3.6" fill="#272a33"/></svg>
</body></html>
